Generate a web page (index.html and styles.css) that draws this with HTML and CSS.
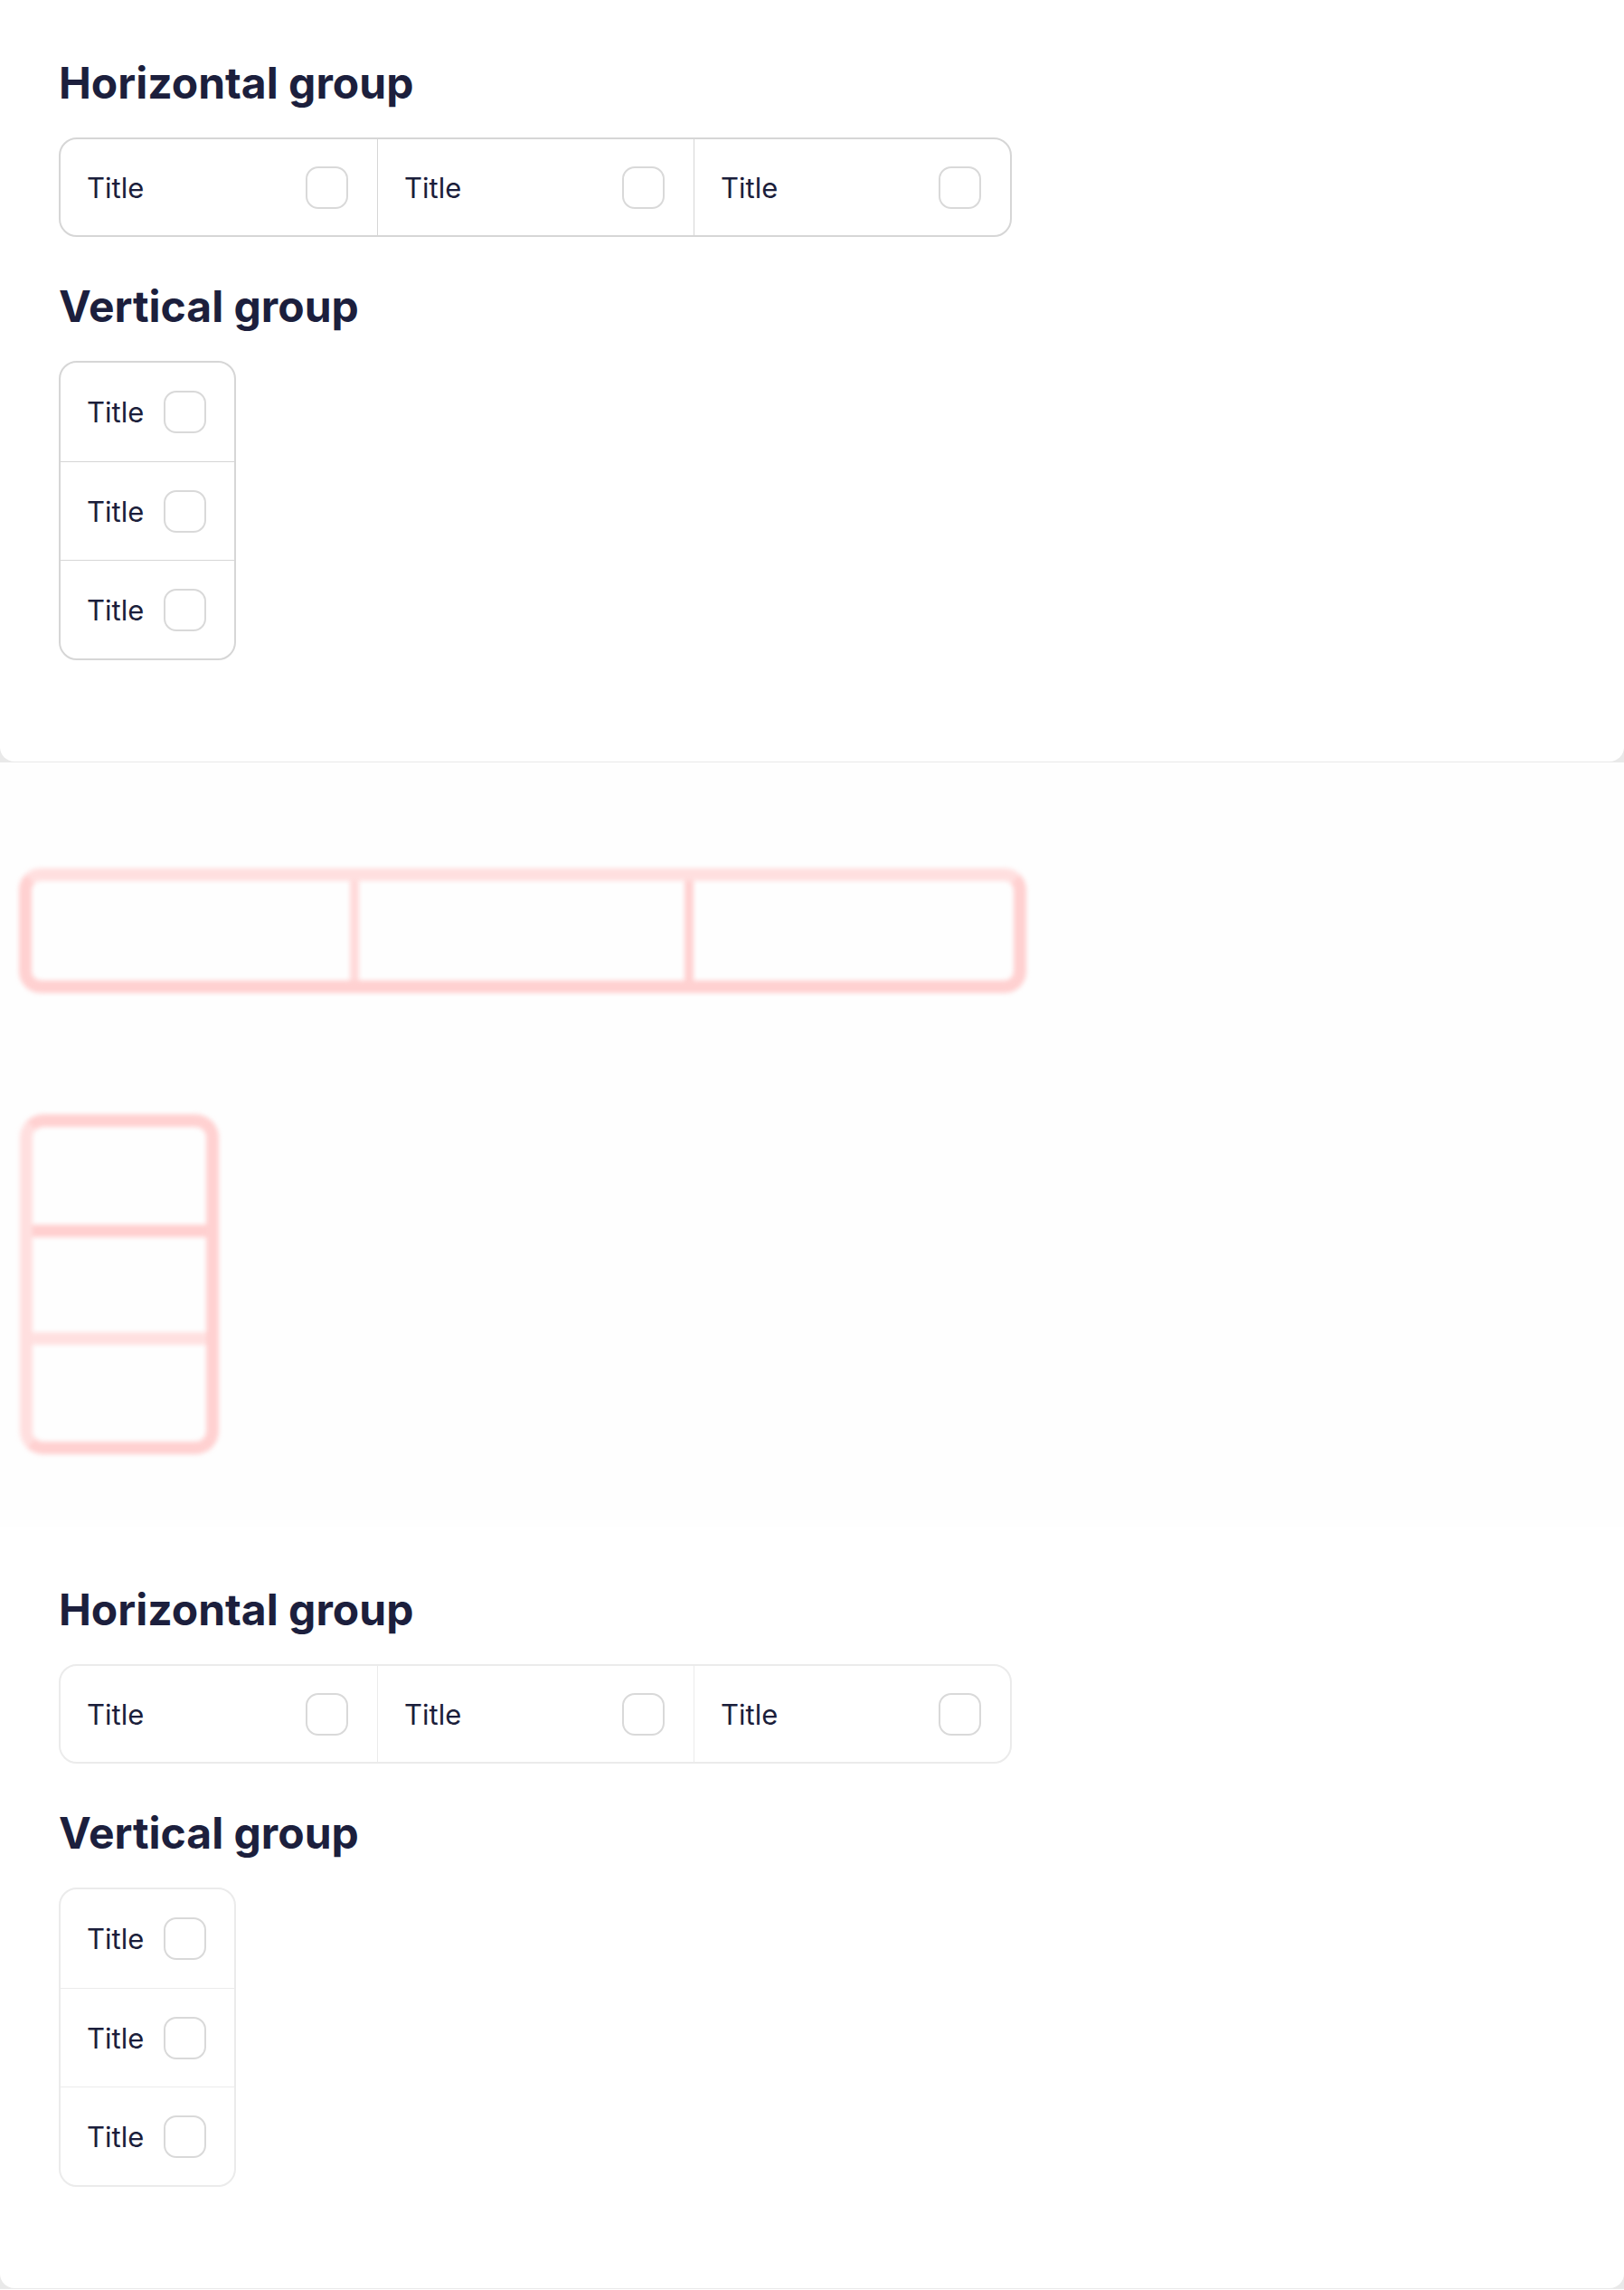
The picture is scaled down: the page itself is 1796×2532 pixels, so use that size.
FILE: index.html
```html
<!DOCTYPE html>
<html lang="en">
<head>
<meta charset="utf-8">
<title>Groups</title>
<link rel="stylesheet" href="styles.css">
</head>
<body>
  <div class="frame">
    <section class="card">
      <h2 class="heading heading-first">Horizontal group</h2>
      <div class="hgroup">
        <div class="hcell"><span class="label">Title</span><span class="check"></span></div>
        <div class="hcell"><span class="label">Title</span><span class="check"></span></div>
        <div class="hcell"><span class="label">Title</span><span class="check"></span></div>
      </div>
      <h2 class="heading heading-next">Vertical group</h2>
      <div class="vgroup">
        <div class="vcell"><span class="label">Title</span><span class="check"></span></div>
        <div class="vcell"><span class="label">Title</span><span class="check"></span></div>
        <div class="vcell"><span class="label">Title</span><span class="check"></span></div>
      </div>
    </section>
  </div>

  <section class="stage">
    <div class="glow-h">
      <div class="glow-hcell glow-hcell-a"></div>
      <div class="glow-hcell glow-hcell-b"></div>
      <div class="glow-hcell glow-hcell-c"></div>
    </div>
    <div class="glow-v">
      <div class="glow-vcell glow-vcell-a"></div>
      <div class="glow-vcell glow-vcell-b"></div>
      <div class="glow-vcell glow-vcell-c"></div>
    </div>
  </section>

  <div class="frame">
    <section class="card card-light">
      <h2 class="heading heading-first">Horizontal group</h2>
      <div class="hgroup">
        <div class="hcell"><span class="label">Title</span><span class="check"></span></div>
        <div class="hcell"><span class="label">Title</span><span class="check"></span></div>
        <div class="hcell"><span class="label">Title</span><span class="check"></span></div>
      </div>
      <h2 class="heading heading-next">Vertical group</h2>
      <div class="vgroup">
        <div class="vcell"><span class="label">Title</span><span class="check"></span></div>
        <div class="vcell"><span class="label">Title</span><span class="check"></span></div>
        <div class="vcell"><span class="label">Title</span><span class="check"></span></div>
      </div>
    </section>
  </div>
</body>
</html>
```

FILE: styles.css
```css
* {
  box-sizing: border-box;
}

html, body {
  margin: 0;
  padding: 0;
  background: #ffffff;
}

body {
  font-family: Inter, "Noto Sans", "Liberation Sans", sans-serif;
  color: #1b1e3b;
}

.frame {
  background: #e9e9e9;
  padding-bottom: 1px;
}

.card {
  background: #ffffff;
  height: 842px;
  border-radius: 0 0 16px 16px;
  padding: 0 0 0 65px;
  overflow: hidden;
  display: flex;
  flex-direction: column;
  align-items: flex-start;
  --group-border: #d6d6d6;
}

.card-light {
  --group-border: #ebebeb;
}

.heading {
  margin: 0;
  font-size: 48px;
  line-height: 58px;
  font-weight: 700;
  letter-spacing: 0;
  color: #1c1f3d;
}

.heading-first {
  margin-top: 63px;
  margin-bottom: 31px;
}

.heading-next {
  margin-top: 48px;
  margin-bottom: 31px;
}

.hgroup {
  display: flex;
  border: 2px solid var(--group-border);
  border-radius: 20px;
  overflow: hidden;
}

.hcell {
  width: 350px;
  height: 106px;
  display: flex;
  align-items: center;
  justify-content: space-between;
  padding: 0 32px 0 29px;
}

.hcell + .hcell {
  border-left: 1.5px solid var(--group-border);
}

.vgroup {
  display: flex;
  flex-direction: column;
  width: 196px;
  border: 2px solid var(--group-border);
  border-radius: 20px;
  overflow: hidden;
}

.vcell {
  height: 109px;
  display: flex;
  align-items: center;
  justify-content: space-between;
  padding: 0 31px 0 29px;
}

.vcell + .vcell {
  border-top: 1.5px solid var(--group-border);
}

.label {
  font-size: 31px;
  line-height: 1;
  font-weight: 400;
  color: #1b1e3b;
}

.check {
  width: 47px;
  height: 47px;
  border: 2px solid #d9d9d9;
  border-radius: 14px;
  background: #ffffff;
  flex: none;
}

/* glow stage */
.stage {
  height: 845px;
  background: #fefefe;
  padding-top: 117px;
  display: flex;
  flex-direction: column;
  align-items: flex-start;
}

.glow-h {
  margin-left: 21px;
  display: flex;
  border: 14px solid #ffd1d1;
  border-top-color: #ffdfdf;
  border-radius: 24px;
  filter: blur(2.5px);
}

.glow-hcell {
  height: 110px;
}

.glow-hcell-a {
  width: 352px;
}

.glow-hcell-b {
  width: 370px;
  border-left: 10px solid #ffdada;
}

.glow-hcell-c {
  width: 364px;
  border-left: 10px solid #ffd1d1;
}

.glow-v {
  margin-top: 134px;
  margin-left: 22px;
  width: 220px;
  display: flex;
  flex-direction: column;
  border: 14px solid #ffd1d1;
  border-left-color: #ffdfdf;
  border-radius: 26px;
  filter: blur(2.5px);
}

.glow-vcell-a {
  height: 122px;
  border-bottom: 14px solid #ffd0d0;
}

.glow-vcell-b {
  height: 119px;
  border-bottom: 14px solid #ffe0e0;
}

.glow-vcell-c {
  height: 107px;
}
```
